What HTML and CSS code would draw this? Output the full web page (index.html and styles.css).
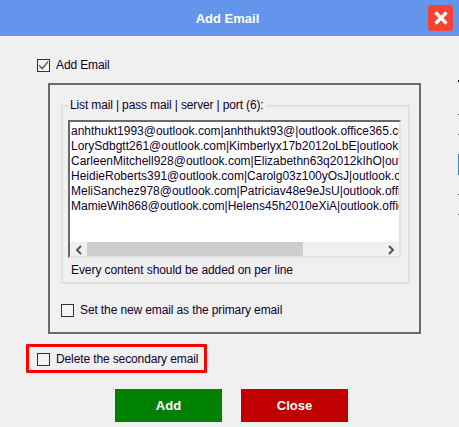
FILE: index.html
```html
<!DOCTYPE html>
<html lang="en">
<head>
<meta charset="utf-8">
<title>Add Email</title>
<link rel="stylesheet" href="styles.css">
</head>
<body>
<div class="window">
  <header class="titlebar">
    <span class="title">Add Email</span>
    <button class="close-x" aria-label="Close">
      <svg width="16" height="16" viewBox="0 0 16 16"><path d="M2.5 2.5 13.5 13.5M13.5 2.5 2.5 13.5" stroke="#fff" stroke-width="3.2" fill="none"/></svg>
    </button>
  </header>
  <main class="content">
    <label class="check add-check">
      <span class="box"><svg width="11" height="11" viewBox="0 0 11 11"><path d="M1.2 5.6 4.2 8.6 10 1.6" stroke="#555" stroke-width="1.4" fill="none"/></svg></span>
      Add Email
    </label>
    <section class="outer">
      <fieldset class="group">
        <legend>List mail | pass mail | server | port (6):</legend>
        <div class="textarea">
          <div class="lines">
            <div>anhthukt1993@outlook.com|anhthukt93@|outlook.office365.com|993</div>
            <div>LorySdbgtt261@outlook.com|Kimberlyx17b2012oLbE|outlook.office365.com|993</div>
            <div>CarleenMitchell928@outlook.com|Elizabethn63q2012kIhO|outlook.office365.com|993</div>
            <div>HeidieRoberts391@outlook.com|Carolg03z100yOsJ|outlook.office365.com|993</div>
            <div>MeliSanchez978@outlook.com|Patriciav48e9eJsU|outlook.office365.com|993</div>
            <div>MamieWih868@outlook.com|Helens45h2010eXiA|outlook.office365.com|993</div>
          </div>
          <div class="scrollbar">
            <span class="arrow"><svg width="8" height="10" viewBox="0 0 8 10"><path d="M6 1 2 5 6 9" stroke="#555" stroke-width="2" fill="none"/></svg></span>
            <span class="thumb"></span>
            <span class="arrow end"><svg width="8" height="10" viewBox="0 0 8 10"><path d="M2 1 6 5 2 9" stroke="#555" stroke-width="2" fill="none"/></svg></span>
          </div>
        </div>
        <p class="hint">Every content should be added on per line</p>
      </fieldset>
      <label class="check primary-check"><span class="box"></span>Set the new email as the primary email</label>
    </section>
    <div class="highlight">
      <label class="check"><span class="box"></span>Delete the secondary email</label>
    </div>
    <div class="actions">
      <button class="btn add">Add</button>
      <button class="btn close">Close</button>
    </div>
  </main>
  <div class="edge edge-a"></div>
  <div class="edge edge-b"></div>
  <div class="edge edge-c"></div>
  <div class="edge edge-d"></div>
  <div class="edge edge-e"></div>
  <div class="edge edge-f"></div>
</div>
</body>
</html>
```
FILE: styles.css
```css
html, body {
  margin: 0;
  padding: 0;
}
body {
  background: #f0f0f0;
  color: #10002a;
  font: 12px/15px "Liberation Sans", Arial, sans-serif;
}
.window {
  position: relative;
  width: 459px;
  height: 427px;
  overflow: hidden;
}
.titlebar {
  display: grid;
  grid-template-columns: 1fr auto 1fr;
  align-items: center;
  height: 36px;
  background: #6495ed;
}
.title {
  grid-column: 2;
  padding-right: 4px;
  color: #fff;
  font-weight: 700;
  font-size: 13px;
}
.close-x {
  grid-column: 3;
  justify-self: end;
  display: flex;
  align-items: center;
  justify-content: center;
  width: 25px;
  height: 26px;
  margin-right: 6px;
  padding: 0;
  border: 0;
  border-radius: 3px;
  background: #f44336;
}
.content {
  display: flex;
  flex-direction: column;
  align-items: flex-start;
}
.check {
  display: flex;
  align-items: center;
  gap: 6px;
  height: 15px;
  letter-spacing: -0.12px;
  white-space: nowrap;
}
.box {
  display: flex;
  flex: none;
  align-items: center;
  justify-content: center;
  box-sizing: border-box;
  width: 13px;
  height: 13px;
  background: #f4f4f4;
  border: 1px solid #333;
}
.add-check {
  margin: 22px 0 0 37px;
}
.outer {
  box-sizing: border-box;
  width: 373px;
  height: 251px;
  margin: 10px 0 0 48px;
  border: 2px solid #6a6a6a;
  padding: 0 0 0 11px;
}
.group {
  box-sizing: border-box;
  width: 349px;
  height: 186px;
  margin: 13px 0 0;
  padding: 0 7px 0 5px;
  border: 2px solid #e0e0e0;
  min-width: 0;
}
.group legend {
  margin-left: 0;
  padding: 0 2px;
  letter-spacing: -0.14px;
  white-space: nowrap;
}
.textarea {
  box-sizing: border-box;
  position: relative;
  width: 333px;
  height: 138px;
  margin-top: 7px;
  background: #fff;
  border-style: solid;
  border-width: 2px;
  border-color: #696969 #e3e3e3 #e3e3e3 #696969;
  overflow: hidden;
}
.lines {
  height: 120px;
  padding: 2px 0 0 1px;
  overflow: hidden;
  white-space: nowrap;
}
.scrollbar {
  display: flex;
  align-items: center;
  height: 15px;
  margin-top: -2px;
  background: #f0f0f0;
}
.arrow {
  display: flex;
  align-items: center;
  justify-content: center;
  flex: none;
  width: 17px;
  height: 15px;
}
.thumb {
  flex: none;
  width: 216px;
  height: 15px;
  background: #cdcdcd;
}
.arrow.end {
  margin-left: auto;
}
.hint {
  margin: 5px 0 0 3px;
  letter-spacing: -0.07px;
}
.primary-check {
  margin-top: 19px;
}
.highlight {
  box-sizing: border-box;
  width: 181px;
  height: 29px;
  margin: 10px 0 0 26px;
  padding: 5px 0 0 8px;
  border: 3px solid #f00;
  border-radius: 1px;
}
.actions {
  display: flex;
  gap: 19px;
  margin: 16px 0 0 115px;
}
.btn {
  width: 107px;
  height: 33px;
  padding: 0;
  border: 0;
  color: #fff;
  font: 700 13px/15px "Liberation Sans", Arial, sans-serif;
}
.btn.add {
  background: #008000;
}
.btn.close {
  background: #c00000;
}
.edge {
  position: absolute;
  left: 458px;
  width: 1px;
  height: 1px;
  background: #555;
}
.edge-a { top: 80px; height: 2px; background: #111; }
.edge-b { top: 114px; }
.edge-c { top: 134px; }
.edge-d { top: 154px; height: 21px; background: #3f87c9; }
.edge-e { top: 194px; }
.edge-f { top: 214px; }
```
